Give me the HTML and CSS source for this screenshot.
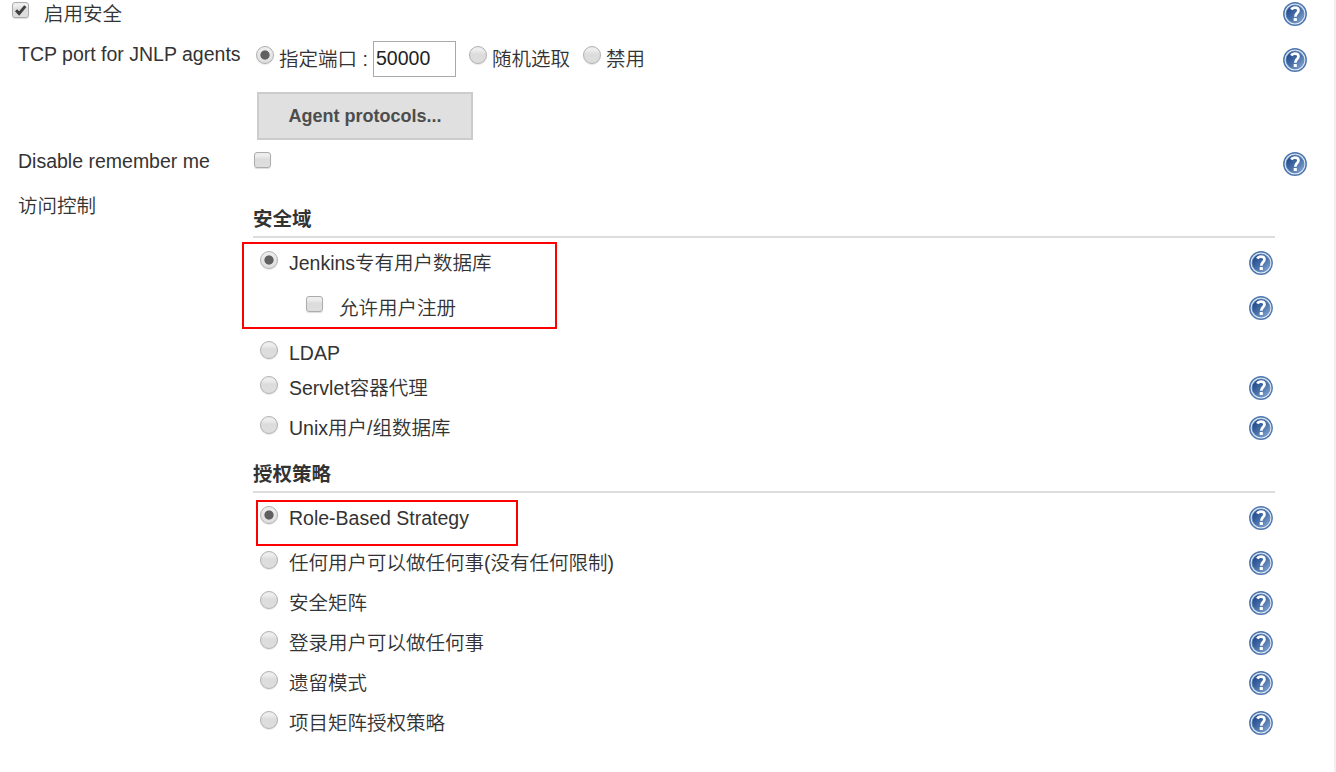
FILE: index.html
```html
<!DOCTYPE html>
<html lang="zh-CN">
<head>
<meta charset="utf-8">
<title>全局安全配置</title>
<link rel="stylesheet" href="styles.css">
</head>
<body>
<svg class="defs" width="0" height="0">
  <defs>
    <linearGradient id="disc" x1="0" y1="0" x2="1" y2="1">
      <stop offset="0.15" stop-color="#234a8a"/>
      <stop offset="0.55" stop-color="#4a72ac"/>
      <stop offset="1" stop-color="#8fafd6"/>
    </linearGradient>
    <symbol id="help" viewBox="0 0 24 24">
      <circle cx="12" cy="12" r="11.2" fill="#e4ecf5" stroke="#4f78b0" stroke-width="1.5"/>
      <circle cx="12" cy="12" r="9" fill="url(#disc)" stroke="#5d83b8" stroke-width="0.8"/>
      <path d="M8.400 7.600C9 6.200 10.400 5.600 12 5.600C14.200 5.600 15.500 6.700 15.500 8.400C15.500 10.900 12.300 11.200 12.300 14.700" fill="none" stroke="#fff" stroke-width="2.700"/>
      <rect x="10.700" y="16" width="3.200" height="2.900" rx="0.500" fill="#fff"/>
    </symbol>
  </defs>
</svg>
<main class="page">
  <div class="row row-enable">
    <span class="check checked"><svg viewBox="0 0 17 17"><path d="M3.500 8.300L6.900 12L14 3.500" /></svg></span>
    <span class="text">启用安全</span>
    <svg class="help"><use href="#help"/></svg>
  </div>
  <div class="row row-port">
    <span class="label">TCP port for JNLP agents</span>
    <div class="ports">
      <span class="radio on"></span><span class="port-fixed">指定端口 :</span>
      <input class="port" type="text" value="50000">
      <span class="radio"></span><span class="port-random">随机选取</span>
      <span class="radio"></span><span class="port-off">禁用</span>
    </div>
    <svg class="help"><use href="#help"/></svg>
  </div>
  <button class="button" type="button">Agent protocols...</button>
  <div class="row row-remember">
    <span class="label">Disable remember me</span>
    <span class="check"></span>
    <svg class="help"><use href="#help"/></svg>
  </div>
  <div class="access">
    <span class="label">访问控制</span>
    <div class="settings">
      <section class="realm">
        <h2>安全域</h2>
        <div class="options">
          <div class="row"><span class="radio on"></span><span class="text">Jenkins专有用户数据库</span><svg class="help"><use href="#help"/></svg></div>
          <div class="row nested"><span class="check"></span><span class="text">允许用户注册</span><svg class="help"><use href="#help"/></svg></div>
          <div class="row short"><span class="radio"></span><span class="text">LDAP</span></div>
          <div class="row medium"><span class="radio"></span><span class="text">Servlet容器代理</span><svg class="help"><use href="#help"/></svg></div>
          <div class="row medium"><span class="radio"></span><span class="text">Unix用户/组数据库</span><svg class="help"><use href="#help"/></svg></div>
          <div class="mark mark-realm"></div>
        </div>
      </section>
      <section class="strategy">
        <h2>授权策略</h2>
        <div class="options">
          <div class="row"><span class="radio on"></span><span class="text">Role-Based Strategy</span><svg class="help"><use href="#help"/></svg></div>
          <div class="row"><span class="radio"></span><span class="text">任何用户可以做任何事(没有任何限制)</span><svg class="help"><use href="#help"/></svg></div>
          <div class="row medium"><span class="radio"></span><span class="text">安全矩阵</span><svg class="help"><use href="#help"/></svg></div>
          <div class="row medium"><span class="radio"></span><span class="text">登录用户可以做任何事</span><svg class="help"><use href="#help"/></svg></div>
          <div class="row medium"><span class="radio"></span><span class="text">遗留模式</span><svg class="help"><use href="#help"/></svg></div>
          <div class="row medium"><span class="radio"></span><span class="text">项目矩阵授权策略</span><svg class="help"><use href="#help"/></svg></div>
          <div class="mark mark-strategy"></div>
        </div>
      </section>
    </div>
  </div>
</main>
</body>
</html>
```

FILE: styles.css
```css
* { box-sizing: border-box; }

body {
  margin: 0;
  background: #fff;
  color: #333;
  font-family: "Liberation Sans", "Noto Sans CJK SC", sans-serif;
  font-size: 19.5px;
  font-weight: 350;
  line-height: 24px;
}

.defs { display: block; }

.page {
  height: 772px;
  overflow: hidden;
  padding: 2px 27px 0 18px;
  border-right: 2px solid #f0f0f0;
}

.row {
  display: flex;
  align-items: center;
  height: 24px;
  white-space: nowrap;
}

.help {
  flex: none;
  width: 24px;
  height: 24px;
  margin-left: auto;
}

.label { flex: none; width: 235px; white-space: nowrap; }

/* Form controls */
.radio {
  flex: none;
  width: 18px;
  height: 18px;
  margin-bottom: 6px;
  border: 1px solid #b0b0b0;
  border-radius: 50%;
  background: linear-gradient(#ededed 20%, #dcdcdc 45%, #dedede);
  box-shadow: 0 1px 1px #e6e6e6;
}

.radio.on {
  background: radial-gradient(circle, #606060 4.2px, transparent 5px), linear-gradient(#eee, #dedede);
}

.check {
  flex: none;
  width: 17px;
  height: 16px;
  border: 1px solid #acacac;
  border-radius: 3px;
  background: linear-gradient(#ededed 20%, #dcdcdc 45%, #dedede);
  box-shadow: 0 1px 1px #ddd;
}

.check svg { display: block; width: 15px; height: 15px; }
.check path { fill: none; stroke: #404040; stroke-width: 3.4; }

/* Top rows */
.row-enable .check { margin: 0 15px 8px -6px; }

.row-port { height: 36px; margin-top: 15px; }
.row-port .label { padding-bottom: 10px; }
.row-port .help { margin-top: 2px; }

.ports {
  display: flex;
  align-items: center;
  height: 36px;
  padding-left: 3px;
}

.ports .radio { margin: 0 5px 8px 0; }
.port-fixed { width: 94px; padding-bottom: 1px; }
.port-random { width: 91px; padding-bottom: 1px; }
.port-off { padding-bottom: 1px; }

.port {
  width: 83px;
  height: 36px;
  margin: 0 13px 0 0;
  padding: 0 2px 2px;
  border: 1px solid #a9a9a9;
  background: #fff;
  color: #222;
  font: 19.5px "Liberation Sans", sans-serif;
}

.button {
  display: block;
  width: 216px;
  height: 48px;
  margin: 15px 0 0 239px;
  padding: 0;
  border: 2px solid #ccc;
  background: #e0e0e0;
  color: #4d4d4d;
  font: bold 18px "Liberation Sans", sans-serif;
}

.row-remember { margin-top: 12px; }
.row-remember .label { padding-bottom: 6px; }
.row-remember .check { margin: 0 0 8px 1px; }

/* Access control */
.access { display: flex; margin-top: 18px; }
.settings { width: 1022px; }
.realm { padding-top: 12px; }
.strategy { padding-top: 21px; }

h2 {
  height: 32px;
  margin: 0;
  padding-top: 1px;
  border-bottom: 2px solid #ddd;
  font-size: 19.5px;
  font-weight: bold;
  line-height: 24px;
}

.options {
  position: relative;
  padding: 13px 2px 0 7px;
}

.options .radio { margin-right: 11px; }
.options .row + .row { margin-top: 21px; }
.options .row + .medium { margin-top: 16px; }
.options .short + .medium { margin-top: 11px; }
.nested { padding-left: 46px; }
.nested .check { margin: 0 16px 8px 0; }

/* Highlight frames drawn over the options */
.mark { position: absolute; border: 2px solid #f00; }
.mark-realm { left: -11px; top: 4px; width: 315px; height: 87px; }
.mark-strategy { left: 3px; top: 7px; width: 262px; height: 46px; }
```
